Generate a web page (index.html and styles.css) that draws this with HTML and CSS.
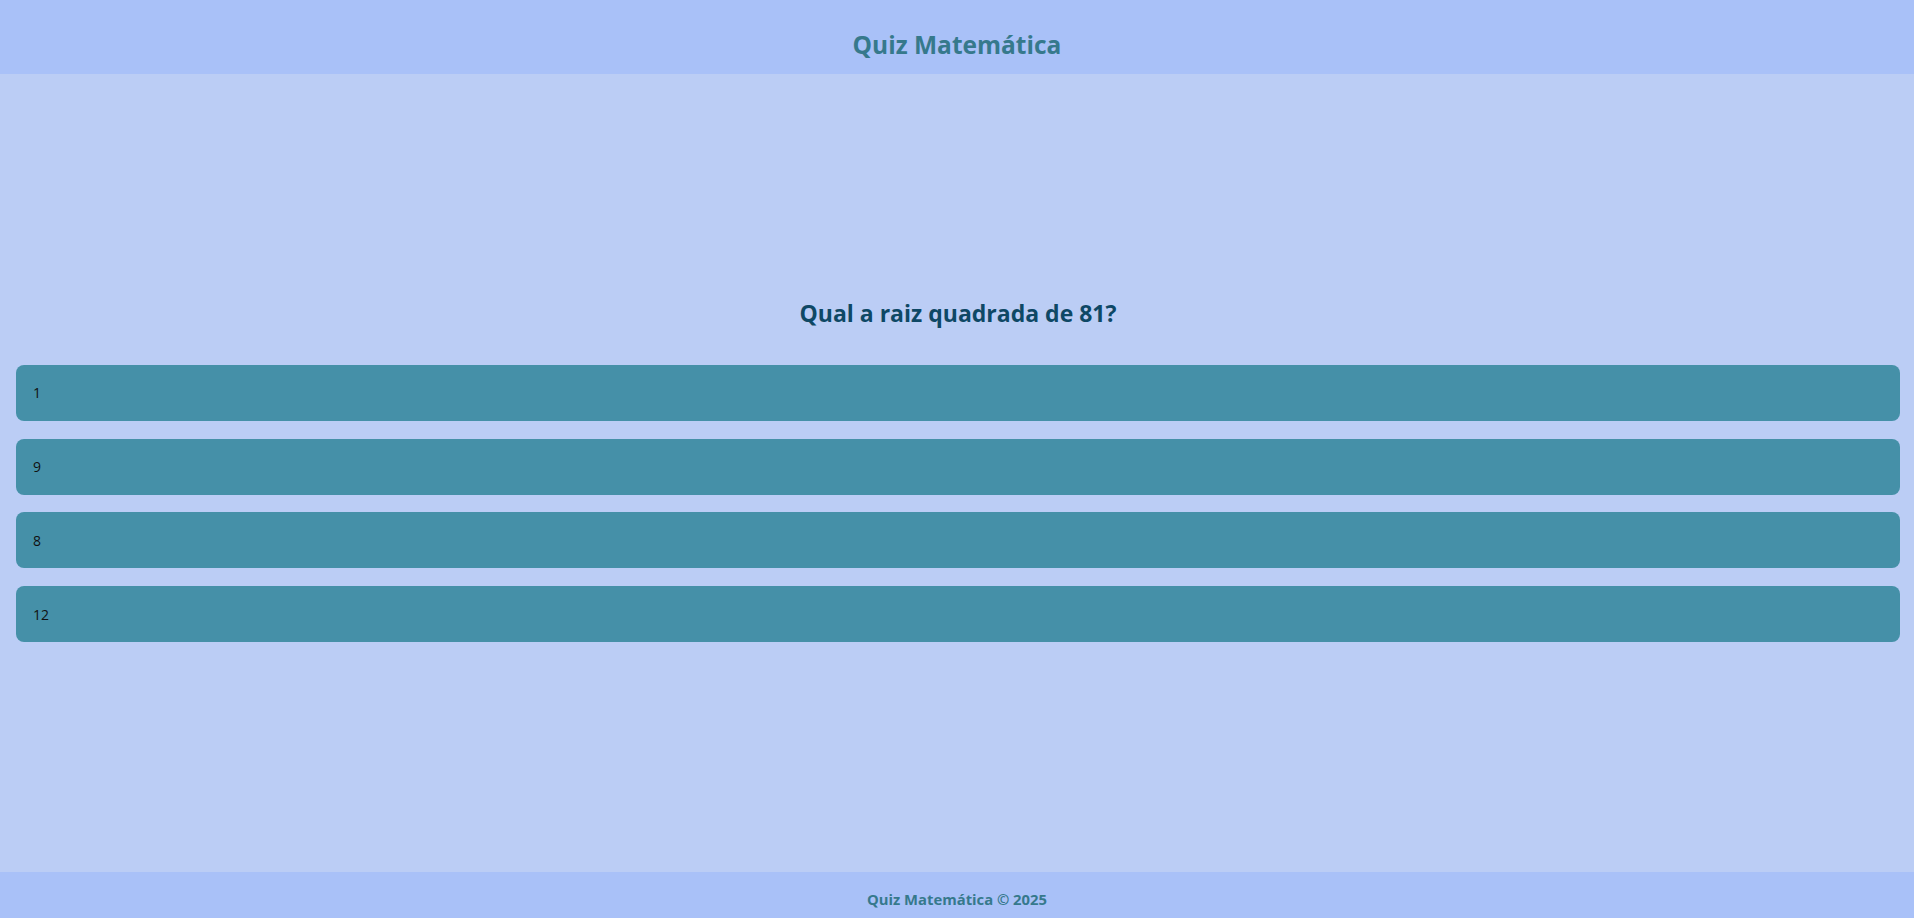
FILE: index.html
```html
<!DOCTYPE html>
<html lang="pt-BR">
<head>
<meta charset="utf-8">
<title>Quiz Matemática</title>
<link rel="stylesheet" href="styles.css">
</head>
<body>
<header class="top-bar">
  <h1 class="brand">Quiz Matemática</h1>
</header>
<main class="quiz">
  <h2 class="question">Qual a raiz quadrada de 81?</h2>
  <div class="answers">
    <button class="answer">1</button>
    <button class="answer">9</button>
    <button class="answer">8</button>
    <button class="answer">12</button>
  </div>
</main>
<footer class="bottom-bar">
  <p class="copy">Quiz Matemática © 2025</p>
</footer>
</body>
</html>
```

FILE: styles.css
```css
* { box-sizing: border-box; }
html, body { height: 100%; }
body {
  margin: 0;
  font-family: "Open Sans", "Noto Sans", sans-serif;
  background: #bbcdf5;
  display: flex;
  flex-direction: column;
  min-height: 100vh;
}
.top-bar {
  background: #a9c1f8;
  height: 74px;
  display: flex;
  align-items: center;
  justify-content: center;
}
.brand {
  margin: 0;
  font-size: 24.5px;
  line-height: 32px;
  font-weight: 700;
  color: #36798c;
  padding-top: 16px;
}
.quiz {
  flex: 1;
  display: flex;
  flex-direction: column;
  justify-content: center;
  padding: 0 14px 6.5px 16px;
}
.question {
  margin: 0 0 35.5px;
  text-align: center;
  font-size: 23px;
  line-height: 32px;
  font-weight: 700;
  color: #0e4865;
}
.answers {
  display: flex;
  flex-direction: column;
  gap: 17.7px;
}
.answer {
  display: block;
  width: 100%;
  height: 56px;
  padding: 0 17px;
  border: none;
  border-radius: 8px;
  background: #4590a8;
  color: #111;
  font-family: inherit;
  font-size: 14px;
  text-align: left;
}
.bottom-bar {
  background: #a9c1f8;
  height: 46px;
  display: flex;
  align-items: center;
  justify-content: center;
}
.copy {
  margin: 0;
  font-size: 14.8px;
  line-height: 20px;
  font-weight: 700;
  color: #36798c;
  padding-top: 8px;
}
```
